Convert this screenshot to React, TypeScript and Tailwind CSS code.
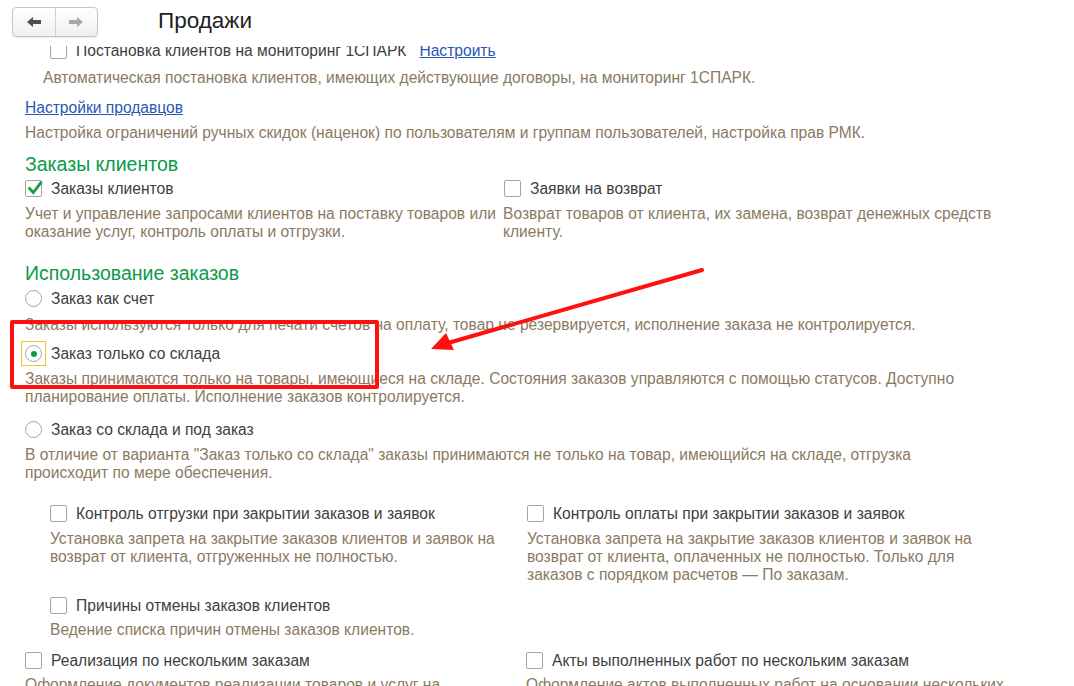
import React from 'react';

const LABEL = 'text-[15.6px] leading-[18px] text-[#404040] whitespace-nowrap';
const DESC = 'text-[15.6px] leading-[18px] text-[#8a7a62] whitespace-nowrap';
const HEAD = 'text-[19.5px] leading-[22px] text-[#0b9a48] whitespace-nowrap';

const Checkbox: React.FC<{ checked?: boolean }> = ({ checked }) => (
  <span className="relative w-[17px] h-[17px] shrink-0 rounded-[2px] border border-[#a4a4a4] bg-white">
    {checked && (
      <svg className="absolute left-[1px] top-[-1px]" width="16" height="16" viewBox="0 0 16 16">
        <path d="M2.5 8.5 L6.3 12.5 L13.8 2.8" fill="none" stroke="#19a040" strokeWidth="2.8" strokeLinecap="square" />
      </svg>
    )}
  </span>
);

const Radio: React.FC<{ checked?: boolean; focused?: boolean }> = ({ checked, focused }) => (
  <span className="relative w-[17px] h-[17px] shrink-0">
    {focused && <span className="absolute -left-[4px] -top-[4px] w-[25px] h-[25px] border border-[#f2c230]"></span>}
    <span className="absolute inset-0 rounded-full border border-[#a4a4a4] bg-white flex items-center justify-center">
      {checked && <span className="w-[6px] h-[6px] rounded-full bg-[#14964a]"></span>}
    </span>
  </span>
);

const CheckRow: React.FC<{ label: string; checked?: boolean; className?: string; children?: React.ReactNode }> = ({ label, checked, className, children }) => (
  <div className={`flex items-center gap-[9px] h-[17px] ${className ?? ''}`}>
    <Checkbox checked={checked} />
    <span className={LABEL}>{label}</span>
    {children}
  </div>
);

const RadioRow: React.FC<{ label: string; checked?: boolean; focused?: boolean; className?: string }> = ({ label, checked, focused, className }) => (
  <div className={`flex items-center gap-[9px] h-[17px] ${className ?? ''}`}>
    <Radio checked={checked} focused={focused} />
    <span className={LABEL}>{label}</span>
  </div>
);

const App: React.FC = () => {
  return (
    <div className="relative w-[1074px] h-[686px] overflow-hidden bg-white flex flex-col" style={{ fontFamily: '"Liberation Sans", Arial, sans-serif' }}>
      {/* шапка формы */}
      <div className="h-[46px] shrink-0 flex items-center bg-white relative z-10">
        <div className="ml-[12px] mt-[-2px] flex h-[30px] w-[86px] rounded-[4px] border border-[#c6c6c6] bg-gradient-to-b from-white to-[#efefef] shadow-[0_1px_1px_rgba(0,0,0,0.08)]">
          <div className="flex-1 flex items-center justify-center border-r border-[#d2d2d2]">
            <svg width="16" height="12" viewBox="0 0 16 12">
              <path d="M1 6 L7 1 L7 4 L15 4 L15 8 L7 8 L7 11 Z" fill="#4d4d4d" />
            </svg>
          </div>
          <div className="flex-1 flex items-center justify-center">
            <svg width="16" height="12" viewBox="0 0 16 12">
              <path d="M15 6 L9 1 L9 4 L1 4 L1 8 L9 8 L9 11 Z" fill="#a9a9a9" />
            </svg>
          </div>
        </div>
        <span className="ml-[60px] mt-[-4px] text-[22.5px] leading-[26px] text-[#1e1e1e]">Продажи</span>
      </div>

      {/* прокручиваемая область */}
      <div className="flex-1 overflow-hidden">
        <div className="mt-[-4px] pl-[25px]">
          <CheckRow label="Постановка клиентов на мониторинг 1СПАРК" className="ml-[25px]">
            <span className="ml-[4px] text-[15.6px] leading-[18px] text-[#2757b3] underline whitespace-nowrap">Настроить</span>
          </CheckRow>
          <p className={`${DESC} mt-[10px] ml-[18px]`}>Автоматическая постановка клиентов, имеющих действующие договоры, на мониторинг 1СПАРК.</p>

          <p className="mt-[12px] text-[15.6px] leading-[18px] text-[#2757b3] underline whitespace-nowrap">Настройки продавцов</p>
          <p className={`${DESC} mt-[7px]`}>Настройка ограничений ручных скидок (наценок) по пользователям и группам пользователей, настройка прав РМК.</p>

          <h2 className={`${HEAD} mt-[11px]`}>Заказы клиентов</h2>
          <div className="grid grid-cols-[478px_1fr] mt-[5px]">
            <div>
              <CheckRow label="Заказы клиентов" checked />
              <p className={`${DESC} mt-[8px]`}>Учет и управление запросами клиентов на поставку товаров или<br />оказание услуг, контроль оплаты и отгрузки.</p>
            </div>
            <div>
              <CheckRow label="Заявки на возврат" className="ml-[1px]" />
              <p className={`${DESC} mt-[8px]`}>Возврат товаров от клиента, их замена, возврат денежных средств<br />клиенту.</p>
            </div>
          </div>

          <h2 className={`${HEAD} mt-[21px]`}>Использование заказов</h2>
          <RadioRow label="Заказ как счет" className="mt-[6px]" />
          <p className={`${DESC} mt-[9px]`}>Заказы используются только для печати счетов на оплату, товар не резервируется, исполнение заказа не контролируется.</p>
          <RadioRow label="Заказ только со склада" checked focused className="mt-[11px]" />
          <p className={`${DESC} mt-[8px]`}>Заказы принимаются только на товары, имеющиеся на складе. Состояния заказов управляются с помощью статусов. Доступно<br />планирование оплаты. Исполнение заказов контролируется.</p>
          <RadioRow label="Заказ со склада и под заказ" className="mt-[15px]" />
          <p className={`${DESC} mt-[8px]`}>В отличие от варианта "Заказ только со склада" заказы принимаются не только на товар, имеющийся на складе, отгрузка<br />происходит по мере обеспечения.</p>

          <div className="ml-[25px] mt-[23px] grid grid-cols-[477px_1fr] gap-y-[13px]">
            <div>
              <CheckRow label="Контроль отгрузки при закрытии заказов и заявок" />
              <p className={`${DESC} mt-[8px] leading-[17.5px]`}>Установка запрета на закрытие заказов клиентов и заявок на<br />возврат от клиента, отгруженных не полностью.</p>
            </div>
            <div>
              <CheckRow label="Контроль оплаты при закрытии заказов и заявок" />
              <p className={`${DESC} mt-[8px] leading-[17.5px]`}>Установка запрета на закрытие заказов клиентов и заявок на<br />возврат от клиента, оплаченных не полностью. Только для<br />заказов с порядком расчетов — По заказам.</p>
            </div>
            <div>
              <CheckRow label="Причины отмены заказов клиентов" />
              <p className={`${DESC} mt-[7px]`}>Ведение списка причин отмены заказов клиентов.</p>
            </div>
          </div>

          <div className="mt-[13px] grid grid-cols-[501px_1fr]">
            <div>
              <CheckRow label="Реализация по нескольким заказам" />
              <p className={`${DESC} mt-[7px]`}>Оформление документов реализации товаров и услуг на</p>
            </div>
            <div>
              <CheckRow label="Акты выполненных работ по нескольким заказам" />
              <p className={`${DESC} mt-[7px]`}>Оформление актов выполненных работ на основании нескольких</p>
            </div>
          </div>
        </div>
      </div>

      {/* пометки поверх скриншота */}
      <div className="absolute left-[10px] top-[320px] w-[369px] h-[69px] border-[4px] border-[#ff1010] rounded-[2px] pointer-events-none"></div>
      <svg className="absolute left-0 top-0 pointer-events-none" width="1074" height="686" viewBox="0 0 1074 686">
        <line x1="702" y1="270" x2="448" y2="343" stroke="#ff1010" strokeWidth="4" strokeLinecap="round" />
        <path d="M431 349 L446 333 L454 350 Z" fill="#ff1010" />
      </svg>
    </div>
  );
};

export default App;
